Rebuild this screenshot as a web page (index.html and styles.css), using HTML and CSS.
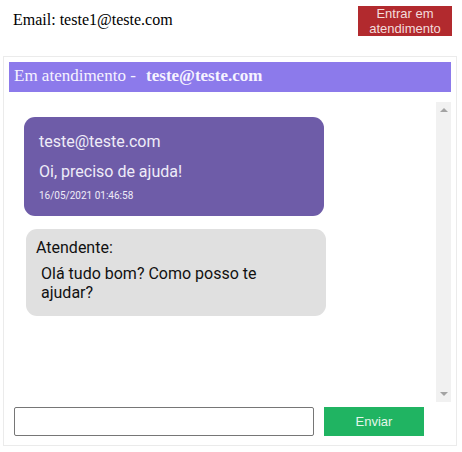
FILE: index.html
```html
<!DOCTYPE html>
<html>
<head>
<meta charset="utf-8">
<link rel="stylesheet" href="styles.css">
</head>
<body>
<div class="topbar">
  <span class="email">Email: teste1@teste.com</span>
  <button class="enter-btn">Entrar em atendimento</button>
</div>
<div class="card">
  <div class="chat-header">Em atendimento - <b class="client">teste@teste.com</b></div>
  <div class="messages">
    <div class="msg-list">
      <div class="bubble bubble-client">
        <div class="b-name">teste@teste.com</div>
        <div class="b-text">Oi, preciso de ajuda!</div>
        <div class="b-time">16/05/2021 01:46:58</div>
      </div>
      <div class="bubble bubble-agent">
        <div class="a-name">Atendente:</div>
        <div class="a-text">Olá tudo bom? Como posso te ajudar?</div>
      </div>
    </div>
    <div class="scrollbar">
      <span class="arrow arrow-up"></span>
      <span class="arrow arrow-down"></span>
    </div>
  </div>
  <div class="composer">
    <input class="msg-input" type="text">
    <button class="send-btn">Enviar</button>
  </div>
</div>
</body>
</html>
```
FILE: styles.css
```css
html, body { margin: 0; padding: 0; background: #fff; }
body { font-family: "Liberation Serif", serif; width: 462px; }

.topbar {
  display: flex;
  justify-content: space-between;
  align-items: flex-start;
  padding: 6px 10px 0 13px;
  height: 50px;
  box-sizing: border-box;
}
.email { font-size: 16px; color: #000; line-height: 18px; margin-top: 5px; }
.enter-btn {
  width: 94px; height: 30px;
  background: #b22a2e; color: #f3dcdc;
  border: none; padding: 0; margin: 0;
  font-family: "Liberation Sans", sans-serif; font-size: 13px; line-height: 15px;
}

.card {
  margin: 6px 0 0 3px;
  width: 454px;
  box-sizing: border-box;
  border: 1px solid #ebebeb;
  padding: 5px 5px 9px 5px;
}
.chat-header {
  height: 30px;
  background: #8c7aeb;
  color: #f6f3ff;
  font-size: 17px;
  line-height: 28px;
  padding-left: 5px;
}
.client { margin-left: 6px; }

.messages {
  margin-top: 10px;
  height: 300px;
  display: flex;
}
.msg-list {
  flex: 1;
  padding: 15px 0 0 15px;
  font-family: Roboto, sans-serif;
}
.scrollbar {
  width: 15px;
  background: #f1f1f1;
  display: flex;
  flex-direction: column;
  justify-content: space-between;
  align-items: center;
  padding: 6px 0;
  box-sizing: border-box;
}
.arrow { width: 0; height: 0; border-left: 4px solid transparent; border-right: 4px solid transparent; }
.arrow-up { border-bottom: 4px solid #a3a3a3; }
.arrow-down { border-top: 4px solid #a3a3a3; }

.bubble { width: 300px; box-sizing: border-box; border-radius: 11px; }
.bubble-client {
  background: #6e5ca8;
  color: #efecf8;
  padding: 13px 15px 13px 15px;
}
.b-name { font-size: 16px; line-height: 24px; }
.b-text { font-size: 16px; line-height: 24px; margin-top: 6px; }
.b-time { font-size: 10px; line-height: 14px; margin-top: 5px; }

.bubble-agent {
  margin: 13px 0 0 2px;
  background: #e0e0e0;
  color: #111;
  padding: 9px 10px 14px 10px;
}
.a-name { font-size: 16px; line-height: 19px; }
.a-text { font-size: 16px; line-height: normal; margin: 7px 0 0 5px; width: 250px; }

.composer {
  display: flex;
  gap: 10px;
  margin-top: 5px;
  padding-left: 5px;
}
.msg-input {
  width: 300px; height: 29px;
  box-sizing: border-box;
  border: 1px solid #767676;
  border-radius: 2px;
  margin: 0; padding: 0 4px;
}
.send-btn {
  width: 100px; height: 29px;
  background: #20b462; color: #e4f6ea;
  border: none; padding: 0; margin: 0;
  font-family: "Liberation Sans", sans-serif; font-size: 13px;
}
```
